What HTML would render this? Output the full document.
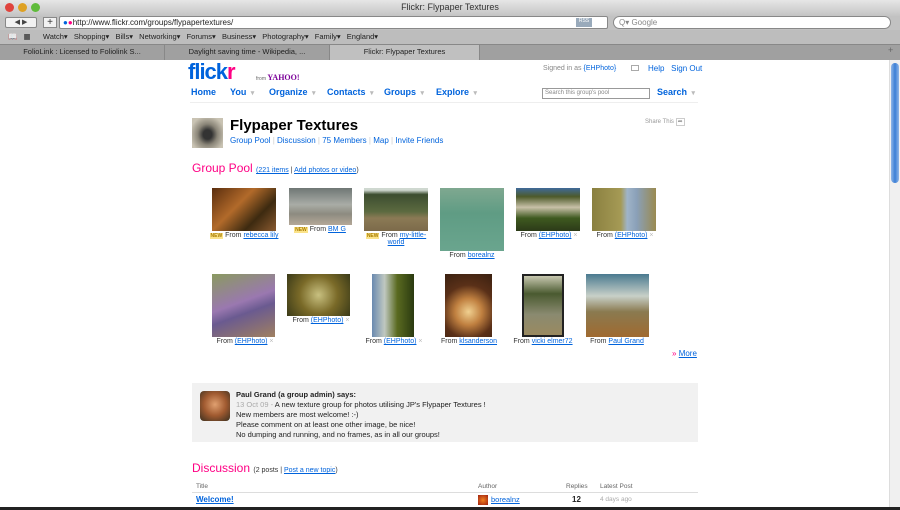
<!DOCTYPE html>
<html><head><meta charset="utf-8"><style>
*{margin:0;padding:0;box-sizing:border-box}
body{width:900px;height:510px;overflow:hidden;background:#fff;font-family:"Liberation Sans",Arial,sans-serif;position:relative;color:#333}
.a{position:absolute;white-space:nowrap}
.lk{color:#0063dc;text-decoration:underline}
.bl{color:#0063dc}
.ph{position:absolute}
.cap{position:absolute;font-size:7px;color:#333;text-align:center;white-space:nowrap}
.cap u{color:#0063dc}
.new{background:#fbe38a;color:#a87c00;font-size:5px;padding:0 1px;font-weight:bold}
.x{color:#bbb}
.nav{font-size:9px;font-weight:bold;color:#0063dc}
.dd{color:#bbb;font-size:7px}
</style></head><body>
<!-- chrome -->
<div class="a" style="left:0;top:0;width:900px;height:16px;background:linear-gradient(#e6e6e6,#c4c4c4)"></div>
<div class="a" style="left:5px;top:3px;width:9px;height:9px;border-radius:50%;background:#e0443e"></div>
<div class="a" style="left:18px;top:3px;width:9px;height:9px;border-radius:50%;background:#dea123"></div>
<div class="a" style="left:31px;top:3px;width:9px;height:9px;border-radius:50%;background:#5fbb3b"></div>
<div class="a" style="left:0;top:2px;width:900px;text-align:center;font-size:9px;color:#333">Flickr: Flypaper Textures</div>
<div class="a" style="left:0;top:16px;width:900px;height:14px;background:#c2c2c2"></div>
<div class="a" style="left:5px;top:17px;width:32px;height:11px;background:#f2f2f2;border:1px solid #888;border-radius:2px;font-size:7px;text-align:center;color:#444">◀ ▶</div>
<div class="a" style="left:43px;top:17px;width:14px;height:11px;background:#f2f2f2;border:1px solid #888;font-size:10px;line-height:9px;text-align:center">+</div>
<div class="a" style="left:59px;top:16px;width:549px;height:13px;background:#fff;border:1px solid #888;border-radius:2px;font-size:8px;line-height:11px;padding-left:3px;color:#222"><span style="color:#0063dc">●</span><span style="color:#ff0084">●</span>http://www.flickr.com/groups/flypapertextures/</div>
<div class="a" style="left:576px;top:18px;width:16px;height:9px;background:#9ab;font-size:5px;color:#fff;text-align:center">RSS</div>
<div class="a" style="left:613px;top:16px;width:278px;height:13px;background:#fff;border:1px solid #888;border-radius:7px;font-size:8px;line-height:11px;padding-left:5px;color:#888">Q▾ Google</div>
<div class="a" style="left:0;top:30px;width:900px;height:14px;background:#bdbdbd;font-size:7.5px;line-height:14px;color:#222;padding-left:8px;word-spacing:1px">📖 &nbsp;▦ &nbsp;&nbsp;&nbsp;Watch▾ &nbsp;Shopping▾ &nbsp;Bills▾ &nbsp;Networking▾ &nbsp;Forums▾ &nbsp;Business▾ &nbsp;Photography▾ &nbsp;Family▾ &nbsp;England▾</div>
<div class="a" style="left:0;top:44px;width:900px;height:16px;background:#a0a0a0;border-top:1px solid #888"></div>
<div class="a" style="left:0;top:45px;width:165px;height:15px;border-right:1px solid #888;font-size:7.5px;line-height:14px;text-align:center;color:#222">FolioLink : Licensed to Foliolink S...</div>
<div class="a" style="left:165px;top:45px;width:165px;height:15px;border-right:1px solid #888;font-size:7.5px;line-height:14px;text-align:center;color:#222">Daylight saving time - Wikipedia, ...</div>
<div class="a" style="left:330px;top:45px;width:150px;height:15px;background:#c0c0c0;border-right:1px solid #888;font-size:7.5px;line-height:14px;text-align:center;color:#222">Flickr: Flypaper Textures</div>
<div class="a" style="left:888px;top:45px;font-size:9px;color:#666">+</div>
<!-- scrollbar -->
<div class="a" style="left:889px;top:60px;width:11px;height:447px;background:#f0f0f0;border-left:1px solid #ddd"></div>
<div class="a" style="left:891px;top:63px;width:8px;height:120px;border-radius:4px;background:linear-gradient(90deg,#8fb6e8,#3c7fd6,#8fb6e8)"></div>
<div class="a" style="left:0;top:507px;width:900px;height:3px;background:#222"></div>
<!-- header -->
<div class="a" style="left:188px;top:59px;font-size:22px;font-weight:bold;letter-spacing:-1px;color:#0063dc">flick<span style="color:#ff0084">r</span></div>
<div class="a" style="left:256px;top:73px;font-size:5px;color:#666">from <span style="font-size:8px;color:#7b0099;font-family:'Liberation Serif',serif;font-weight:bold">YAHOO!</span></div>
<div class="a" style="left:543px;top:65px;font-size:7px;color:#888">Signed in as <span class="bl">{EHPhoto}</span></div>
<div class="a" style="left:631px;top:65px;width:8px;height:6px;border:1px solid #aaa"></div>
<div class="a" style="left:648px;top:64px;font-size:8px" ><span class="bl">Help</span> &nbsp; <span class="bl">Sign Out</span></div>
<div class="a nav" style="left:191px;top:87px">Home</div>
<div class="a nav" style="left:230px;top:87px">You <span class="dd">&nbsp;▾</span></div>
<div class="a nav" style="left:269px;top:87px">Organize <span class="dd">&nbsp;▾</span></div>
<div class="a nav" style="left:327px;top:87px">Contacts <span class="dd">&nbsp;▾</span></div>
<div class="a nav" style="left:384px;top:87px">Groups <span class="dd">&nbsp;▾</span></div>
<div class="a nav" style="left:436px;top:87px">Explore <span class="dd">&nbsp;▾</span></div>
<div class="a" style="left:542px;top:88px;width:108px;height:11px;border:1px solid #999;font-size:6px;color:#888;padding-left:2px;line-height:9px">Search this group's pool</div>
<div class="a nav" style="left:657px;top:87px">Search <span class="dd">&nbsp;▾</span></div>
<div class="a" style="left:190px;top:102px;width:508px;border-top:1px solid #eee"></div>
<!-- group -->
<div class="a" style="left:192px;top:118px;width:31px;height:30px;background:radial-gradient(ellipse at 50% 55%,#333 20%,#8a8578 45%,#c9c3b3 80%)"></div>
<div class="a" style="left:230px;top:117px;font-size:15px;font-weight:bold;color:#000">Flypaper Textures</div>
<div class="a" style="left:230px;top:136px;font-size:8px;color:#ccc"><span class="bl">Group Pool</span> | <span class="bl">Discussion</span> | <span class="bl">75 Members</span> | <span class="bl">Map</span> | <span class="bl">Invite Friends</span></div>
<div class="a" style="left:645px;top:118px;font-size:6px;color:#999">Share This <span style="border:1px solid #ccc;padding:0 1px">➦</span></div>
<div class="a" style="left:192px;top:161px;font-size:12px;color:#ff0084">Group Pool <span style="font-size:7px;color:#333"><u class="bl">(221 items</u> | <u class="bl">Add photos or video</u>)</span></div>
<!-- row1 -->
<div class="ph" style="left:212px;top:188px;width:64px;height:43px;background:linear-gradient(135deg,#5a2e0e,#b26a2a 40%,#3d2a10 70%,#8a5a30)"></div>
<div class="cap" style="left:204px;top:232px;width:80px"><span class="new">NEW</span> From <u>rebecca lily</u></div>
<div class="ph" style="left:289px;top:188px;width:63px;height:37px;background:linear-gradient(#6f7775,#a9aca6 45%,#8d8b80 70%,#b4a898)"></div>
<div class="cap" style="left:280px;top:226px;width:80px"><span class="new">NEW</span> From <u>BM G</u></div>
<div class="ph" style="left:364px;top:188px;width:64px;height:43px;background:linear-gradient(#cfd8d0 5%,#3c4d30 15%,#5c6a40 55%,#8b7a55 70%,#7c6a4a)"></div>
<div class="cap" style="left:356px;top:232px;width:80px"><span class="new">NEW</span> From <u>my-little-</u><br><u>world</u></div>
<div class="ph" style="left:440px;top:188px;width:64px;height:63px;background:linear-gradient(#7fa890,#5f9c84 40%,#6aa58e)"></div>
<div class="cap" style="left:432px;top:252px;width:80px">From <u>borealnz</u></div>
<div class="ph" style="left:516px;top:188px;width:64px;height:43px;background:linear-gradient(#3f6a9a,#4d5a2a 20%,#c8c0a8 45%,#3f5a20 70%,#2c3a18)"></div>
<div class="cap" style="left:508px;top:232px;width:82px">From <u>(EHPhoto)</u> <span class="x">×</span></div>
<div class="ph" style="left:592px;top:188px;width:64px;height:43px;background:linear-gradient(90deg,#8a8040,#a59a55 45%,#9fb4c8 55%,#8aa0b8 70%,#9a8a50)"></div>
<div class="cap" style="left:584px;top:232px;width:82px">From <u>(EHPhoto)</u> <span class="x">×</span></div>
<!-- row2 -->
<div class="ph" style="left:212px;top:274px;width:63px;height:63px;background:linear-gradient(160deg,#8a9a60,#9a78b0 45%,#6a5a90 60%,#a08060)"></div>
<div class="cap" style="left:204px;top:338px;width:82px">From <u>(EHPhoto)</u> <span class="x">×</span></div>
<div class="ph" style="left:287px;top:274px;width:63px;height:42px;background:radial-gradient(circle at 50% 50%,#c8c080,#7a6a28 50%,#3a3a18)"></div>
<div class="cap" style="left:280px;top:317px;width:82px">From <u>(EHPhoto)</u> <span class="x">×</span></div>
<div class="ph" style="left:372px;top:274px;width:42px;height:63px;background:linear-gradient(90deg,#6a8ab0,#c0c8c0 30%,#5a6a20 60%,#2a3a10)"></div>
<div class="cap" style="left:353px;top:338px;width:82px">From <u>(EHPhoto)</u> <span class="x">×</span></div>
<div class="ph" style="left:445px;top:274px;width:47px;height:63px;background:radial-gradient(circle at 50% 60%,#f0d090,#c08040 30%,#5a3018 60%,#3a2010)"></div>
<div class="cap" style="left:429px;top:338px;width:80px">From <u>klsanderson</u></div>
<div class="ph" style="left:522px;top:274px;width:42px;height:63px;background:linear-gradient(#c8c8b0,#4a5a30 30%,#8a8a70 65%,#9a8a60);border:2px solid #222"></div>
<div class="cap" style="left:503px;top:338px;width:80px">From <u>vicki elmer72</u></div>
<div class="ph" style="left:586px;top:274px;width:63px;height:63px;background:linear-gradient(#4a7a90,#c8d0c8 35%,#8a7a50 60%,#a06a30)"></div>
<div class="cap" style="left:577px;top:338px;width:80px">From <u>Paul Grand</u></div>
<div class="a" style="left:672px;top:349px;font-size:8px"><span style="color:#ff0084">»</span> <u class="bl">More</u></div>
<!-- admin box -->
<div class="a" style="left:192px;top:383px;width:506px;height:59px;background:#f1f1f1"></div>
<div class="a" style="left:200px;top:391px;width:30px;height:30px;border-radius:4px;background:radial-gradient(circle at 50% 45%,#e0a070,#a05a30 50%,#3a3020)"></div>
<div class="a" style="left:236px;top:390px;font-size:7.5px;line-height:10px;color:#222"><b>Paul Grand (a group admin) says:</b><br><span style="color:#aaa">13 Oct 09 -</span> A new texture group for photos utilising JP's Flypaper Textures !<br>New members are most welcome! :-)<br>Please comment on at least one other image, be nice!<br>No dumping and running, and no frames, as in all our groups!</div>
<!-- discussion -->
<div class="a" style="left:192px;top:461px;font-size:12px;color:#ff0084">Discussion <span style="font-size:7px;color:#333">(2 posts | <u class="bl">Post a new topic</u>)</span></div>
<div class="a" style="left:196px;top:483px;font-size:6.5px;color:#666">Title</div>
<div class="a" style="left:478px;top:483px;font-size:6.5px;color:#666">Author</div>
<div class="a" style="left:566px;top:483px;font-size:6.5px;color:#666">Replies</div>
<div class="a" style="left:600px;top:483px;font-size:6.5px;color:#666">Latest Post</div>
<div class="a" style="left:192px;top:492px;width:506px;border-top:1px solid #ddd"></div>
<div class="a" style="left:196px;top:495px;font-size:8px;font-weight:bold"><u class="bl">Welcome!</u></div>
<div class="a" style="left:478px;top:495px;width:10px;height:10px;background:radial-gradient(#f08020,#a02010)"></div>
<div class="a" style="left:491px;top:495px;font-size:7.5px"><u class="bl">borealnz</u></div>
<div class="a" style="left:572px;top:495px;font-size:8px;font-weight:bold;color:#222">12</div>
<div class="a" style="left:600px;top:496px;font-size:6.5px;color:#aaa">4 days ago</div>
</body></html>
